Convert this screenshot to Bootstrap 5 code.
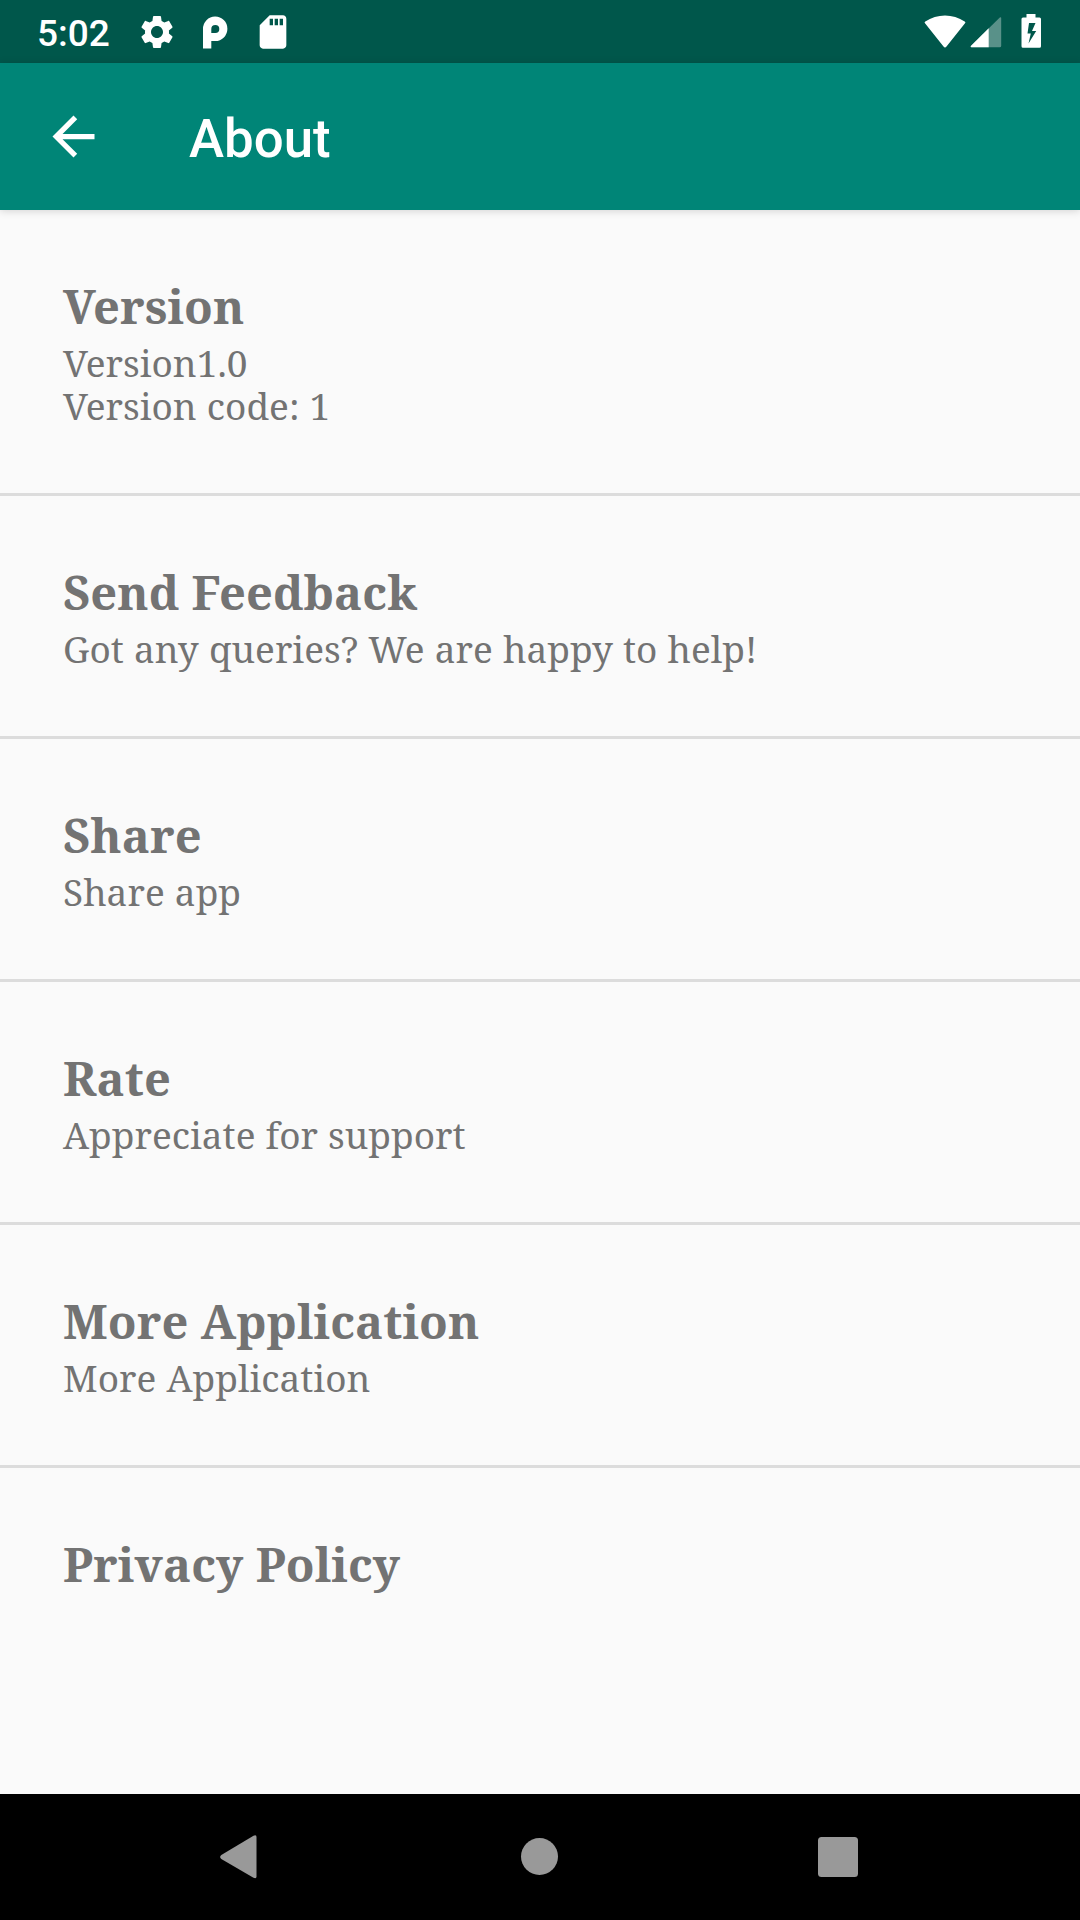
<!DOCTYPE html>
<html lang="en">
<head>
<meta charset="utf-8">
<meta name="viewport" content="width=device-width, initial-scale=1">
<title>About</title>
<link href="https://cdn.jsdelivr.net/npm/bootstrap@5.3.0/dist/css/bootstrap.min.css" rel="stylesheet">
<style>
  body { background: #fafafa; font-family: Roboto, sans-serif; height: 1920px; overflow: hidden; }
  svg { display: block; flex: none; }
  .status-bar { height: 63px; background: #00574b; padding-left: 37px; padding-right: 27px; color: #fff; }
  .clock { font-size: 37px; font-weight: 500; line-height: 43px; padding-top: 3px; width: 100px; }
  .sd-icon { margin-left: 20px; }
  .app-bar { height: 147px; background: #008577; padding-left: 42px; color: #fff; box-shadow: 0 1px 8px rgba(0,0,0,.16); z-index: 1; }
  .app-title { font-size: 52.8px; font-weight: 500; line-height: 62px; padding-top: 4px; margin-left: 84px; }
  .about-list .list-group-item { background: transparent; border-color: #dcdcdc; border-width: 0 0 3px; padding: 66px 63px 0; height: 243px; color: #737373; font-family: "Noto Serif", "DejaVu Serif", serif; }
  .about-list .list-group-item:first-child { height: 286px; }
  .about-list .list-group-item:last-child { border-bottom: 0; }
  .item-title { font-size: 47px; font-weight: 700; line-height: 60px; margin: 0 0 5px; letter-spacing: .08px; }
  .item-text { font-size: 37px; line-height: 43px; margin: 0; word-spacing: .5px; }
  .nav-keys { height: 126px; background: #000; padding: 0 90px; }
  .nav-keys svg { fill: #999; }
</style>
</head>
<body class="d-flex flex-column">
<header class="status-bar d-flex align-items-center flex-shrink-0">
  <div class="clock">5:02</div>
  <svg width="40" height="40" viewBox="0 0 24 24" fill="#fff"><path d="M19.14 12.94c.04-.3.06-.61.06-.94 0-.32-.02-.64-.07-.94l2.03-1.58c.18-.14.23-.41.12-.61l-1.92-3.32c-.12-.22-.37-.29-.59-.22l-2.39.96c-.5-.38-1.03-.7-1.62-.94l-.36-2.54c-.04-.24-.24-.41-.48-.41h-3.84c-.24 0-.43.17-.47.41l-.36 2.54c-.59.24-1.13.57-1.62.94l-2.39-.96c-.22-.08-.47 0-.59.22L2.74 8.87c-.12.21-.08.47.12.61l2.03 1.58c-.05.3-.09.63-.09.94s.02.64.07.94l-2.03 1.58c-.18.14-.23.41-.12.61l1.92 3.32c.12.22.37.29.59.22l2.39-.96c.5.38 1.03.7 1.62.94l.36 2.54c.05.24.24.41.48.41h3.84c.24 0 .44-.17.47-.41l.36-2.54c.59-.24 1.13-.56 1.62-.94l2.39.96c.22.08.47 0 .59-.22l1.92-3.32c.12-.22.07-.47-.12-.61l-2.01-1.58zM12 15.6c-1.98 0-3.6-1.62-3.6-3.6s1.62-3.6 3.6-3.6 3.6 1.62 3.6 3.6-1.62 3.6-3.6 3.6z"/></svg>
  <svg class="ms-4" width="32" height="34" viewBox="0 0 32 34"><path fill="#fff" fill-rule="evenodd" d="M2 33.500V14A12.200 12.200 0 1 1 14.200 26H10.300V33.500ZM10.300 14V18H14.300A4 4 0 1 0 10.300 14Z"/></svg>
  <svg class="sd-icon" width="40" height="40" viewBox="0 0 24 24" fill="#fff"><path d="M18 2h-8L4.020 8 4 20c0 1.100.9 2 2 2h12c1.100 0 2-.9 2-2V4c0-1.100-.9-2-2-2zm-6 6h-2V4h2v4zm3 0h-2V4h2v4zm3 0h-2V4h2v4z"/></svg>
  <div class="d-flex align-items-center ms-auto">
    <svg width="42" height="34" viewBox="0 0 42 34" fill="#fff"><path d="M1.200 8.500Q0 7.500 1.300 6.600C13-1.500 29-1.500 40.700 6.600Q42 7.500 40.800 8.500L22.500 31.500Q21 33.300 19.500 31.500Z"/></svg>
    <svg class="ms-1" width="32" height="32" viewBox="0 0 32 32"><path d="M31.200 2Q31.200.5 29.800 1.600L.8 30Q.2 31.200 1.500 31.200H29.700Q31.200 31.200 31.200 29.700Z" fill="#fff" opacity=".35"/><path d="M18.700 12.300L.8 30Q.2 31.200 1.500 31.200H18.700Z" fill="#fff"/></svg>
    <svg width="51" height="36" viewBox="-1 0 51 36"><path fill="#fff" fill-rule="evenodd" d="M23.500 0H32.500V3.500H36.500Q38 3.500 38 5V32.300Q38 33.800 36.500 33.800H20Q18.500 33.800 18.500 32.300V5Q18.500 3.500 20 3.500H23.500ZM26 9L24.500 19.500H27.800L25.500 29.500L33.200 17H29L32.500 9Z"/></svg>
  </div>
</header>

<nav class="app-bar d-flex align-items-center flex-shrink-0">
  <svg width="63" height="63" viewBox="0 0 24 24" fill="#fff"><path d="M20 11H7.830l5.590-5.590L12 4l-8 8 8 8 1.410-1.410L7.830 13H20v-2z"/></svg>
  <h1 class="app-title mb-0">About</h1>
</nav>

<main class="flex-grow-1">
  <ul class="list-group list-group-flush about-list">
    <li class="list-group-item"><h2 class="item-title">Version</h2><p class="item-text">Version1.0<br>Version code: 1</p></li>
    <li class="list-group-item"><h2 class="item-title">Send Feedback</h2><p class="item-text">Got any queries? We are happy to help!</p></li>
    <li class="list-group-item"><h2 class="item-title">Share</h2><p class="item-text">Share app</p></li>
    <li class="list-group-item"><h2 class="item-title">Rate</h2><p class="item-text">Appreciate for support</p></li>
    <li class="list-group-item"><h2 class="item-title">More Application</h2><p class="item-text">More Application</p></li>
    <li class="list-group-item"><h2 class="item-title">Privacy Policy</h2></li>
  </ul>
</main>

<footer class="nav-keys d-flex align-items-center flex-shrink-0">
  <div class="flex-fill d-flex justify-content-center"><svg width="64" height="64" viewBox="0 0 64 64"><path d="M45.500 10.800Q48.500 9.500 48.500 12V51.500Q48.500 54 45.500 52.700L13.300 34Q11 32 13.300 30Z"/></svg></div>
  <div class="flex-fill d-flex justify-content-center"><svg width="64" height="64" viewBox="0 0 64 64"><circle cx="31.500" cy="31.500" r="18.500"/></svg></div>
  <div class="flex-fill d-flex justify-content-center"><svg width="64" height="64" viewBox="0 0 64 64"><rect x="10" y="12" width="40" height="40" rx="3.500"/></svg></div>
</footer>
<script src="https://cdn.jsdelivr.net/npm/bootstrap@5.3.0/dist/js/bootstrap.bundle.min.js"></script>
</body>
</html>
